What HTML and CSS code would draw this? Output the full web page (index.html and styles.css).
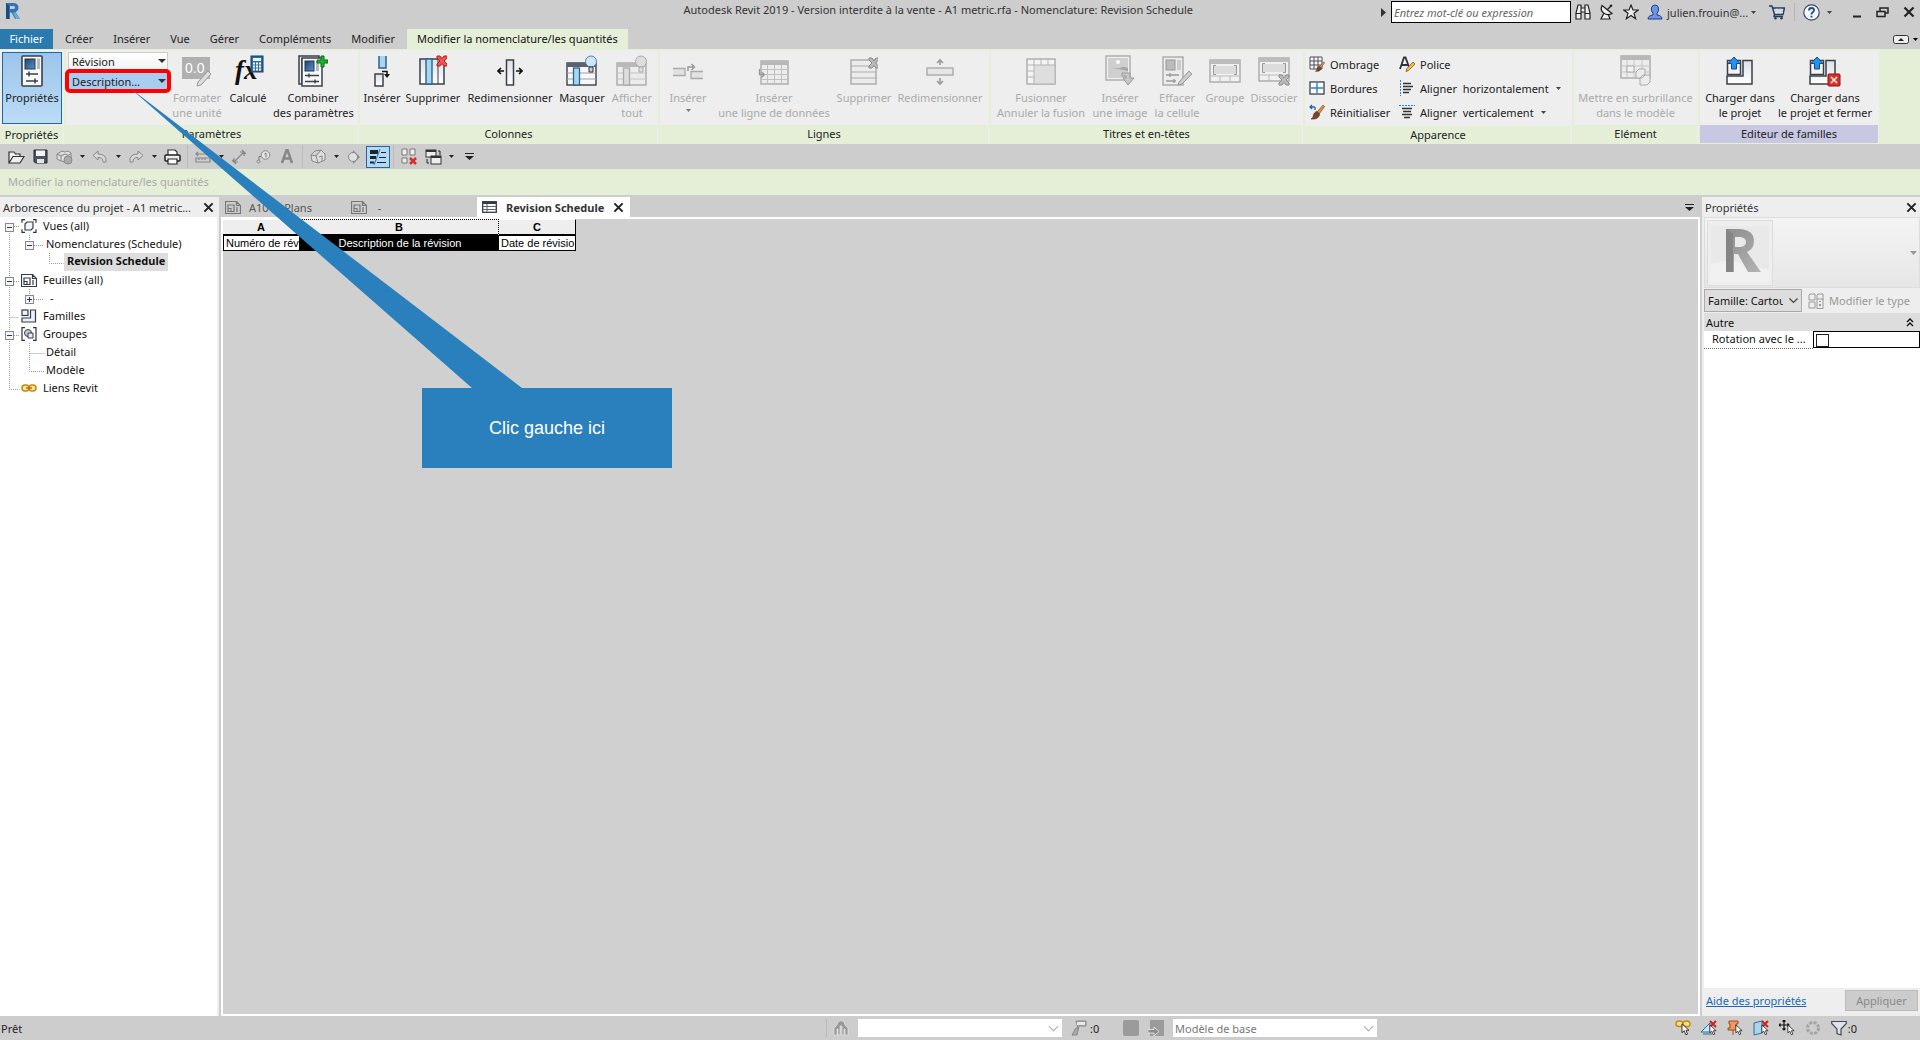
FILE: index.html
```html
<!DOCTYPE html>
<html lang="fr">
<head>
<meta charset="utf-8">
<title>Autodesk Revit 2019</title>
<link rel="stylesheet" href="styles.css">
</head>
<body>
<svg class="defs" aria-hidden="true">
  <defs>
    <linearGradient id="paper" x1="0" y1="0" x2="0" y2="1"><stop offset="0" stop-color="#dde0e6"/><stop offset="1" stop-color="#fff"/></linearGradient>
    <linearGradient id="blue" x1="0" y1="0" x2="1" y2="1"><stop offset="0" stop-color="#1c4572"/><stop offset="1" stop-color="#5d93c8"/></linearGradient>
    <linearGradient id="grey3d" x1="0" y1="0" x2="1" y2="1"><stop offset="0" stop-color="#8c8c8c"/><stop offset="1" stop-color="#b4b4b4"/></linearGradient>
    <symbol id="caret" viewBox="0 0 7 4"><path d="M0 0h7L3.500 4z" fill="currentColor"/></symbol>
    <symbol id="cross" viewBox="0 0 12 12"><path d="M1.500 1.500l9 9M10.500 1.500l-9 9" stroke="currentColor" stroke-width="2.200" fill="none"/></symbol>
    <symbol id="sheet" viewBox="0 0 16 13"><path d="M.5.5h11l4 4v8H.5z M11.500.5v4h4 M3 4h6v6.500H3z M3 7.500h3V10.500 M12 6v5" fill="none" stroke="currentColor" stroke-width="1.200"/></symbol>
    <symbol id="cursor" viewBox="0 0 9 13"><path d="M1 .8v9l2.200-2 1.600 4 1.700-.7L5 7.300h3z" fill="#fff" stroke="#222" stroke-width=".9"/></symbol>
    <symbol id="props" viewBox="0 0 22 32"><rect x="1" y="1" width="20" height="30" rx="1" fill="#f8f9fb" stroke="#3a404a" stroke-width="1.600"/><rect x="4" y="4" width="10" height="10" fill="url(#blue)" stroke="#22354c"/><path d="M16 3.500h3V14h-3z" fill="#b4b9c2"/><path d="M5 19h12M5 26h12" stroke="#3a404a" stroke-width="1.500"/><path d="M8 16.500v5M14 23.500v5" stroke="#3a404a" stroke-width="1.500"/></symbol>
    <symbol id="brush" viewBox="0 0 16 16"><path d="M8 8L14 1.200 15.500 2.500 10 10z" fill="#e79a43" stroke="#7a431a" stroke-width=".8"/><path d="M8 7.500l2.500 2.500c0 4-4 5.500-8.500 5 2-1 2-2 2.500-4 .5-2 1.500-3 3.500-3.500z" fill="#77452a" stroke="#4b2a17" stroke-width=".6"/></symbol>
    <symbol id="load" viewBox="0 0 28 30"><path d="M17 4.500h9V28H1V20h16z" fill="url(#paper)" stroke="#3a404a" stroke-width="1.500"/><rect x="1.500" y="4.500" width="13" height="14" fill="#f4f5f8" stroke="#3a404a" stroke-width="1.500"/><path d="M8 1l6 6.500h-3.500V13h-5V7.500H2z" fill="#2492f0" stroke="#0f4b91"/></symbol>
  </defs>
</svg>

<header class="titlebar">
  <svg class="app-logo" width="16" height="18" viewBox="0 0 16 18"><path d="M1 1h8q4.500.5 4.500 4.500 0 3-3 4.500L15 17h-5L6.500 10.500H5V17H1z" fill="#2f74b5"/><path d="M1 1l3 3v13H1z" fill="#1b4a80"/><path d="M5 4h3.500q1.500 0 1.500 1.500T8.500 7H5z" fill="#cdcdcd"/><path d="M8 11l2-1 5 7h-4z" fill="#67aed2"/></svg>
  <h1 class="window-title">Autodesk Revit 2019 - Version interdite à la vente - A1 metric.rfa - Nomenclature: Revision Schedule</h1>
  <div class="title-tools">
    <svg width="5" height="9" viewBox="0 0 5 9"><path d="M0 0l5 4.500L0 9z" fill="#333"/></svg>
    <input class="search" type="text" placeholder="Entrez mot-clé ou expression" aria-label="Recherche">
    <button class="tool" aria-label="Rechercher"><svg width="16" height="16" viewBox="0 0 16 16"><path d="M3 1h3v3h4V1h3l2 8v6h-5V8H6v7H1V9zM1 9.500h5M10 9.500h5M6 4v4M10 4v4" fill="#eee" stroke="#222" stroke-width="1.200"/></svg></button>
    <button class="tool" aria-label="Communication"><svg width="16" height="16" viewBox="0 0 16 16"><path d="M5 9l-3 6h9l-2-5" fill="#eee" stroke="#222" stroke-width="1.200"/><path d="M3 1.500c-3 6 4 11.500 10 8z" fill="#eee" stroke="#222" stroke-width="1.200"/><path d="M8 6l4-4" stroke="#222" stroke-width="1.200"/><circle cx="12" cy="1.800" r="1.300" fill="#222"/></svg></button>
    <button class="tool" aria-label="Favoris"><svg width="16" height="16" viewBox="0 0 16 16"><path d="M8 1l2 5h5.200l-4.200 3.300 1.600 5.400L8 11.500l-4.600 3.200L5 9.300.8 6H6z" fill="#eee" stroke="#222" stroke-width="1.200"/></svg></button>
    <button class="account"><svg width="16" height="16" viewBox="0 0 16 16"><path d="M1 15q0-3.500 5-4V9.500Q4 7 4.500 4 5 1 8 1t3.500 3q.5 3-1.500 5.500V11q5 .5 5 4z" fill="#6f94e4" stroke="#1c3c88"/></svg><span>julien.frouin@...</span><svg class="caret" width="5" height="3"><use href="#caret"/></svg></button>
    <button class="tool" aria-label="Boutique"><svg width="16" height="15" viewBox="0 0 16 15"><path d="M0 1h3l2.500 8.500H14L15.500 3H4M5.500 9.500L5 11.500h9" fill="none" stroke="#243b5e" stroke-width="1.400"/><path d="M5 5h9M6 7.500h8M8 3.500v5M11 3.500v5" stroke="#dbe3f0"/><circle cx="6.500" cy="13.300" r="1.200" fill="#243b5e"/><circle cx="12.500" cy="13.300" r="1.200" fill="#243b5e"/></svg></button>
    <span class="rule"></span>
    <button class="tool help" aria-label="Aide"><svg width="17" height="17" viewBox="0 0 17 17"><circle cx="8.500" cy="8.500" r="7.700" fill="#f4f7fb" stroke="#3a4a66" stroke-width="1.200"/><path d="M6 6.500q0-2.500 2.500-2.500T11 6.300q0 1.200-1.300 2T8.500 10.500M8.500 11.800v1.800" fill="none" stroke="#1f4f9c" stroke-width="1.900"/></svg><svg class="caret" width="5" height="3"><use href="#caret"/></svg></button>
    <button class="win" aria-label="Réduire"><svg width="9" height="12" viewBox="0 0 9 12"><path d="M0 10.500h8" stroke="#222" stroke-width="2"/></svg></button>
    <button class="win" aria-label="Restaurer"><svg width="13" height="11" viewBox="0 0 13 11"><path d="M4 4V1h8v5H9M1 4.500h8v5H1z" fill="none" stroke="#222" stroke-width="1.500"/></svg></button>
    <button class="win" aria-label="Fermer"><svg class="dark" width="12" height="12"><use href="#cross"/></svg></button>
  </div>
</header>

<nav class="tabs">
  <button class="tab file">Fichier</button>
  <button class="tab">Créer</button>
  <button class="tab">Insérer</button>
  <button class="tab">Vue</button>
  <button class="tab">Gérer</button>
  <button class="tab">Compléments</button>
  <button class="tab">Modifier</button>
  <button class="tab active">Modifier la nomenclature/les quantités</button>
  <button class="ribbon-toggle" aria-label="Réduire le ruban"><svg width="16" height="9" viewBox="0 0 16 9"><rect x=".5" y=".5" width="15" height="8" rx="2" fill="#eee" stroke="#333"/><path d="M5 6l3-3 3 3z" fill="#222"/></svg><svg width="5" height="3"><use href="#caret"/></svg></button>
</nav>

<section class="ribbon" aria-label="Ruban">
  <div class="panel p-props">
    <div class="body">
      <button class="big pressed"><svg class="ico" width="22" height="32"><use href="#props"/></svg>Propriétés</button>
    </div>
    <h2>Propriétés</h2>
  </div>

  <div class="panel p-params">
    <div class="body">
      <div class="combos">
        <span class="combo"><select aria-label="Catégorie"><option>Révision</option></select></span>
        <span class="combo hot"><select aria-label="Paramètre"><option>Description...</option></select></span>
      </div>
      <button class="big" disabled><svg class="ico" width="32" height="32" viewBox="0 0 32 32"><rect x="1" y="2" width="28" height="22" fill="#b0b0b0"/><text x="4" y="18" class="ico-num">0.0</text><path d="M17 27l10-11 3 3-10 11-4 1z" fill="#ddd" stroke="#999"/></svg>Formater<br>une unité</button>
      <button class="big"><svg class="ico" width="32" height="32" viewBox="0 0 32 32"><text x="3" y="24" class="ico-fx">fx</text><rect x="19" y="1" width="12" height="16" fill="#2d6da5" stroke="#1a3a5c"/><path d="M21 3h8v3h-8z" fill="#e9f4fb"/><path d="M21 8.500h8M21 11.500h8M21 14.500h8" stroke="#fff" stroke-width="2" stroke-dasharray="2 1"/></svg>Calculé</button>
      <button class="big"><svg class="ico" width="30" height="32" viewBox="0 0 30 32"><path d="M1 1h20v3H4v25H1z" fill="#eee" stroke="#3a404a" stroke-width="1.500"/><rect x="4" y="3" width="20" height="28" fill="#f8f9fb" stroke="#3a404a" stroke-width="1.500"/><rect x="7" y="6" width="9" height="10" fill="url(#blue)" stroke="#22354c"/><path d="M18 6h3v10h-3z" fill="#b4b9c2"/><path d="M7 20.500h14M7 26.500h14M11 18.500v4M17 24.500v4" stroke="#3a404a" stroke-width="1.400"/><path d="M23 1h3v4h4v3h-4v4h-3V8h-4V5h4z" fill="#19b52b" stroke="#0a6d17"/></svg>Combiner<br>des paramètres</button>
    </div>
    <h2>Paramètres</h2>
  </div>

  <div class="panel p-cols">
    <div class="body">
      <button class="big"><svg class="ico" width="18" height="32" viewBox="0 0 18 32"><path d="M6 1v12h7V1z" fill="#a9d6ee"/><path d="M6 1v12h7V1" fill="none" stroke="#28648f" stroke-width="1.500"/><rect x="2" y="19" width="8" height="12" fill="url(#paper)" stroke="#3a404a" stroke-width="1.500"/><path d="M9 16.500h5v4" fill="none" stroke="#111" stroke-width="1.500"/><path d="M11 19h6l-3 4z" fill="#111"/></svg>Insérer</button>
      <button class="big"><svg class="ico" width="28" height="32" viewBox="0 0 28 32"><rect x="1" y="4" width="24" height="25" fill="url(#paper)" stroke="#3a404a" stroke-width="1.500"/><rect x="7" y="4" width="6" height="25" fill="#a9d6ee" stroke="#28648f" stroke-width="1.400"/><path d="M19 4v25" stroke="#3a404a"/><path d="M18 1l3 0 2 2.500L25 1h3v2l-3 3 3 3v2h-3l-2-2.500L21 11h-3V9l3-3-3-3z" fill="#f2574f" stroke="#b01a16"/></svg>Supprimer</button>
      <button class="big"><svg class="ico" width="26" height="32" viewBox="0 0 26 32"><rect x="9.500" y="5" width="7" height="25" fill="url(#paper)" stroke="#3a404a" stroke-width="1.500"/><path d="M7 16H2M19 16h5M4 13l-3 3 3 3M22 13l3 3-3 3" fill="none" stroke="#111" stroke-width="1.600"/></svg>Redimensionner</button>
      <button class="big"><svg class="ico" width="32" height="32" viewBox="0 0 32 32"><rect x="1" y="8" width="29" height="22" fill="#f7f8fa" stroke="#3a404a" stroke-width="1.400"/><path d="M1 8h29v4H1z" fill="#5c626d"/><path d="M1 18h29M1 24h29" stroke="#9aa0aa"/><rect x="7.500" y="13" width="6" height="17" fill="#a9d6ee" stroke="#28648f" stroke-width="1.300"/><circle cx="25" cy="6.500" r="5.500" fill="#cfe5fa" stroke="#4d7fb5"/><path d="M23 12h4v5h-4z" fill="#ccc" stroke="#333"/></svg>Masquer</button>
      <button class="big" disabled><svg class="ico" width="32" height="32" viewBox="0 0 32 32"><rect x="1" y="8" width="29" height="22" fill="#ececec" stroke="#aaa" stroke-width="1.400"/><path d="M1 8h29v4H1z" fill="#b8b8b8"/><path d="M1 18h29M1 24h29" stroke="#c4c4c4"/><rect x="7.500" y="13" width="6" height="17" fill="#ddd" stroke="#aaa" stroke-width="1.300"/><circle cx="25" cy="6.500" r="5.500" fill="#ddd" stroke="#aaa"/><path d="M23 12h4v5h-4z" fill="#ddd" stroke="#aaa"/></svg>Afficher<br>tout</button>
    </div>
    <h2>Colonnes</h2>
  </div>

  <div class="panel p-rows">
    <div class="body">
      <button class="big" disabled><svg class="ico" width="30" height="32" viewBox="0 0 30 32"><path d="M0 13.500h12v7H0M30 16.500H18v7h12" fill="#e2e2e2" stroke="#aaa" stroke-width="1.300"/><path d="M15 16v-4h5M18.500 9l3 3-3 3" fill="none" stroke="#999" stroke-width="1.500"/></svg>Insérer<svg class="drop" width="5" height="3"><use href="#caret"/></svg></button>
      <button class="big" disabled><svg class="ico" width="32" height="32" viewBox="0 0 32 32"><rect x="3" y="6" width="27" height="23" fill="#ececec" stroke="#aaa" stroke-width="1.400"/><path d="M3 6h27v4H3z" fill="#b8b8b8"/><path d="M3 14.500h27M3 19.500h27M3 24.500h27M9.500 10v19M16.500 10v19M23.500 10v19" stroke="#c0c0c0"/><path d="M1.500 14v5.500h4M3.500 17l3 2.500-3 3" fill="none" stroke="#999" stroke-width="1.400"/></svg>Insérer<br>une ligne de données</button>
      <button class="big" disabled><svg class="ico" width="28" height="32" viewBox="0 0 28 32"><rect x="1" y="5" width="25" height="24" fill="#ececec" stroke="#aaa" stroke-width="1.400"/><path d="M1 11h25M1 17h25M1 23h25" stroke="#aaa"/><path d="M19 3l3 0 2 3L26 3h2.500v2l-3 3 3 3v2H26l-2-2.500L22 13h-3v-2l3-3-3-3z" fill="#bbb" stroke="#888"/></svg>Supprimer</button>
      <button class="big" disabled><svg class="ico" width="28" height="32" viewBox="0 0 28 32"><rect x="1" y="13" width="26" height="7" fill="#e6e6e6" stroke="#aaa" stroke-width="1.400"/><path d="M14 10V6M14 23v5M11 8l3-3 3 3M11 26l3 3 3-3" fill="none" stroke="#999" stroke-width="1.600"/></svg>Redimensionner</button>
    </div>
    <h2>Lignes</h2>
  </div>

  <div class="panel p-titles">
    <div class="body">
      <button class="big" disabled><svg class="ico" width="30" height="32" viewBox="0 0 30 32"><rect x="1" y="4" width="28" height="25" fill="#f4f4f4" stroke="#aaa" stroke-width="1.400"/><path d="M8 10h21v19H8z" fill="#dedede" stroke="#b4b4b4"/><path d="M8 4v6M15 4v6M22 4v6M1 10h7M1 16h7M1 22h7" stroke="#b4b4b4"/></svg>Fusionner<br>Annuler la fusion</button>
      <button class="big" disabled><svg class="ico" width="32" height="32" viewBox="0 0 32 32"><rect x="2" y="1" width="24" height="24" fill="#f0f0f0" stroke="#aaa" stroke-width="1.400"/><path d="M4 3h20v20H4z" fill="#cfcfcf"/><path d="M4 14q8-1 20 2v-3q-5-2-8 0z" fill="#a6a6a6"/><circle cx="14" cy="7" r="2" fill="#fff"/><path d="M18 18h8v5h4l-6 7-5-7h3v-2h-4z" fill="#c8c8c8" stroke="#999"/></svg>Insérer<br>une image</button>
      <button class="big" disabled><svg class="ico" width="30" height="32" viewBox="0 0 30 32"><rect x="1" y="2" width="20" height="28" fill="#ececec" stroke="#aaa" stroke-width="1.400"/><rect x="4" y="5" width="9" height="10" fill="#bbb" stroke="#999"/><path d="M15 5h4v10h-4z" fill="#ccc"/><path d="M4 20h13M4 26h10M8 18v4M12 24v4" stroke="#999" stroke-width="1.300"/><path d="M17 27l10-11 3 3-10 10-4 1z" fill="#ccc" stroke="#999"/></svg>Effacer<br>la cellule</button>
      <button class="big" disabled><svg class="ico" width="32" height="32" viewBox="0 0 32 32"><rect x="1" y="5" width="30" height="22" fill="#f0f0f0" stroke="#aaa" stroke-width="1.400"/><path d="M1 5h30v4H1z" fill="#bcbcbc"/><path d="M1 21h30M11 21v6M21 21v6" stroke="#bbb"/><path d="M5 11h22v8H5z" fill="#dcdcdc"/><path d="M7 10.500H4.500v9H7M25 10.500h2.500v9H25" fill="none" stroke="#999"/></svg>Groupe</button>
      <button class="big" disabled><svg class="ico" width="32" height="32" viewBox="0 0 32 32"><rect x="1" y="3" width="30" height="23" fill="#f0f0f0" stroke="#aaa" stroke-width="1.400"/><path d="M1 3h30v4H1z" fill="#bcbcbc"/><path d="M1 20h30M11 20v6" stroke="#bbb"/><path d="M5 9h22v8H5z" fill="#dcdcdc"/><path d="M7 8.500H4.500v9H7M25 8.500h2.500v9H25" fill="none" stroke="#999"/><path d="M21 20h3l2 3 2-3h3v2l-3 3 3 3v2h-3l-2-2.500-2 2.500h-3v-2l3-3-3-3z" fill="#bbb" stroke="#888"/></svg>Dissocier</button>
    </div>
    <h2>Titres et en-têtes</h2>
  </div>

  <div class="panel p-look">
    <div class="body">
      <div class="small-list">
        <button class="small"><svg width="16" height="16" viewBox="0 0 16 16"><path d="M1 1h12v12H1zM1 5h12M1 9h12M5 1v12M9 1v12" fill="#f6f6f6" stroke="#4a4f59"/><use href="#brush" x="5" y="5" width="11" height="11"/></svg>Ombrage</button>
        <button class="small"><svg width="16" height="16" viewBox="0 0 16 16"><rect x="1" y="2" width="14" height="12" fill="#fff" stroke="#3a404a" stroke-width="1.300"/><path d="M8 3v10M2 8h12" stroke="#2583cf" stroke-width="1.400"/></svg>Bordures</button>
        <button class="small"><svg width="16" height="16" viewBox="0 0 16 16"><use href="#brush"/><path d="M1 3h4q1.500 0 1 3M3 1L1 3l2 2" fill="none" stroke="#1669b3" stroke-width="1.300"/></svg>Réinitialiser</button>
      </div>
      <div class="small-list">
        <button class="small"><svg width="16" height="16" viewBox="0 0 16 16"><path d="M1 13L5 1.500h1.500L10 11M3 9h6" fill="none" stroke="#2d333d" stroke-width="1.800"/><path d="M8 12.500L14 6l2 2-6.500 6.500-2.500 1z" fill="#f3c04d" stroke="#8a4d15" stroke-width=".8"/></svg>Police</button>
        <button class="small"><svg width="16" height="16" viewBox="0 0 16 16"><path d="M1.500 0v16" stroke="#2583cf" stroke-dasharray="2 1"/><path d="M4 3.500h8M4 6.500h10M4 9.500h8M4 12.500h6" stroke="#333" stroke-width="1.300"/></svg>Aligner&nbsp; horizontalement<svg class="caret" width="5" height="3"><use href="#caret"/></svg></button>
        <button class="small"><svg width="16" height="16" viewBox="0 0 16 16"><path d="M0 1.500h16" stroke="#2583cf" stroke-dasharray="2 1"/><path d="M3 4.500h10M4 7.500h8M3 10.500h10M5 13.500h6" stroke="#333" stroke-width="1.300"/></svg>Aligner&nbsp; verticalement<svg class="caret" width="5" height="3"><use href="#caret"/></svg></button>
      </div>
    </div>
    <h2>Apparence</h2>
  </div>

  <div class="panel p-elem">
    <div class="body">
      <button class="big" disabled><svg class="ico" width="32" height="32" viewBox="0 0 32 32"><rect x="1" y="1" width="29" height="22" fill="#ececec" stroke="#aaa" stroke-width="1.400"/><path d="M1 1h29v4H1z" fill="#b8b8b8"/><path d="M1 11h29M1 17h29M7 5v18M14 5v18M22 5v18" stroke="#c4c4c4"/><path d="M7 11h7v6H7z" fill="#f4f4f4" stroke="#aaa"/><path d="M16 17l3-3h6v6l-3 3h-6zM20 23l3-3h7v7l-3 3h-7z" fill="#ececec" stroke="#aaa"/></svg>Mettre en surbrillance<br>dans le modèle</button>
    </div>
    <h2>Elément</h2>
  </div>

  <div class="panel p-family">
    <div class="body">
      <button class="big"><svg class="ico" width="28" height="32"><use href="#load" width="28" height="30" y="1"/></svg>Charger dans<br>le projet</button>
      <button class="big"><svg class="ico" width="32" height="32" viewBox="0 0 32 32"><use href="#load" x="0" y="1" width="28" height="30"/><rect x="19" y="19" width="12" height="12" rx="1" fill="#d9332c" stroke="#8e120e"/><path d="M22 22l6 6M28 22l-6 6" stroke="#fff" stroke-width="1.400"/></svg>Charger dans<br>le projet et fermer</button>
    </div>
    <h2>Editeur de familles</h2>
  </div>
</section>

<div class="quickbar">
  <button class="q" aria-label="Ouvrir"><svg width="17" height="14" viewBox="0 0 17 14"><path d="M1 13V2h5l1.500 2H12v2.500M1 13L5 6.500h11L12 13z" fill="#eee" stroke="#333" stroke-width="1.200"/></svg></button>
  <button class="q" aria-label="Enregistrer"><svg width="15" height="15" viewBox="0 0 15 15"><path d="M1 1h13v13H2.500L1 12.500z" fill="#4a5361" stroke="#22272f"/><path d="M3 1.500h9V7H3z" fill="#f5f5f5"/><path d="M4 10h7v4H4z" fill="#e4e4e4"/></svg></button>
  <button class="q off" aria-label="Synchroniser"><svg width="17" height="16" viewBox="0 0 17 16"><path d="M1 5l5-3 3 1 3-1 3 2v5l-6 4-4-1-4-2zM1 5l4 2 4-2M5 7v5M9 5l3 1.500 3-2" fill="#ddd" stroke="#888"/><circle cx="12" cy="11" r="4" fill="#aaa" stroke="#888"/></svg></button>
  <button class="d" aria-label="Options de synchronisation"><svg width="5" height="3"><use href="#caret"/></svg></button>
  <button class="q off" aria-label="Annuler"><svg width="16" height="13" viewBox="0 0 16 13"><path d="M6 1L1 5.500 6 10V7.500q5-.5 5 4.500h3q1-8-8-8z" fill="#d8d8d8" stroke="#888"/></svg></button>
  <button class="d" aria-label="Liste des annulations"><svg width="5" height="3"><use href="#caret"/></svg></button>
  <button class="q off" aria-label="Rétablir"><svg width="16" height="13" viewBox="0 0 16 13"><path d="M10 1l5 4.500-5 4.500V7.500q-5-.5-5 4.500H2Q1 4 10 4z" fill="#d8d8d8" stroke="#888"/></svg></button>
  <button class="d" aria-label="Liste des rétablissements"><svg width="5" height="3"><use href="#caret"/></svg></button>
  <button class="q" aria-label="Imprimer"><svg width="17" height="16" viewBox="0 0 17 16"><path d="M4 6V1h7l2 2v3" fill="#fff" stroke="#333" stroke-width="1.200"/><rect x="1" y="6" width="15" height="6" rx="1" fill="#eee" stroke="#222" stroke-width="1.500"/><path d="M4 10h9v5H4z" fill="#fff" stroke="#222" stroke-width="1.200"/></svg></button>
  <span class="rule"></span>
  <button class="q off" aria-label="Mesurer"><svg width="16" height="12" viewBox="0 0 16 12"><path d="M1 3h14M3 1L1 3l2 2M13 1l2 2-2 2M1 7h14v4H1zM4 7v2M7 7v2M10 7v2" fill="none" stroke="#888" stroke-width="1.200"/></svg></button>
  <button class="d" aria-label="Options de mesure"><svg width="5" height="3"><use href="#caret"/></svg></button>
  <button class="q off" aria-label="Cote alignée"><svg width="16" height="16" viewBox="0 0 16 16"><path d="M3 13L13 3M9 3h4v4M3 9v4h4M11 1l4 4M1 11l4 4" fill="none" stroke="#888" stroke-width="1.200"/></svg></button>
  <button class="q off" aria-label="Etiquette"><svg width="15" height="14" viewBox="0 0 15 14"><circle cx="9.500" cy="5" r="4.300" fill="#e2e2e2" stroke="#888"/><path d="M8.500 4l1.500-1v4.500M5 6.500H3v4" fill="none" stroke="#777"/><circle cx="2.500" cy="11.500" r="1.500" fill="none" stroke="#888"/></svg></button>
  <button class="q off" aria-label="Texte"><svg width="14" height="15" viewBox="0 0 14 15"><path d="M2 14L6.500 1h1L12 14M4 9.500h6" fill="none" stroke="#888" stroke-width="2.500"/></svg></button>
  <span class="rule"></span>
  <button class="q off" aria-label="Vue 3D"><svg width="16" height="15" viewBox="0 0 16 15"><path d="M1 6l4-4 6-1 4 4v6l-7 3-6-2zM1 6l5 1 5-6M6 7l2 7M9 8l3-1v5" fill="#ddd" stroke="#888"/></svg></button>
  <button class="d" aria-label="Options de vue 3D"><svg width="5" height="3"><use href="#caret"/></svg></button>
  <button class="q off" aria-label="Coupe"><svg width="14" height="14" viewBox="0 0 14 14"><path d="M6 0l7 7-7 7z" fill="#888"/><circle cx="6" cy="7" r="4.500" fill="#e0e0e0" stroke="#888"/></svg></button>
  <button class="q on" aria-label="Lignes fines" aria-pressed="true"><svg width="18" height="16" viewBox="0 0 18 16"><path d="M1 3h8" stroke="#222" stroke-width="4"/><path d="M1 8.500h6" stroke="#222" stroke-width="3"/><path d="M1 13.500h4" stroke="#222" stroke-width="2"/><path d="M12 3.500h5M10 8.500h7M8 13.500h9" stroke="#222"/><path d="M11 0L5 16" stroke="#2583cf" stroke-width="1.200"/></svg></button>
  <span class="rule"></span>
  <button class="q" aria-label="Fermer les fenêtres masquées"><svg width="16" height="17" viewBox="0 0 16 17"><path d="M1 1h5v6H1zM9 1h5v6H9zM1 10h5v5H1z" fill="#eee" stroke="#777"/><path d="M9 10l6 6M15 10l-6 6" stroke="#cf332a" stroke-width="2.500"/></svg></button>
  <button class="q" aria-label="Changer de fenêtre"><svg width="17" height="16" viewBox="0 0 17 16"><rect x="1" y="1" width="10" height="7" fill="#eee" stroke="#333"/><rect x="6" y="7" width="10" height="8" fill="#eee" stroke="#333"/><path d="M1 2h10M6 8h10" stroke="#333" stroke-width="2"/><path d="M13 2h2v4M4 14H2v-4" fill="none" stroke="#222"/></svg></button>
  <button class="d" aria-label="Liste des fenêtres"><svg width="5" height="3"><use href="#caret"/></svg></button>
  <button class="q" aria-label="Personnaliser"><svg width="9" height="7" viewBox="0 0 9 7"><path d="M0 0h9v1H0zM0 3h9L4.500 7z" fill="#222"/></svg></button>
</div>

<div class="optionsbar">Modifier la nomenclature/les quantités</div>

<main class="workspace">
  <aside class="browser">
    <div class="dock-head"><h2>Arborescence du projet - A1 metric...</h2><button class="x" aria-label="Fermer"><svg width="11" height="11"><use href="#cross"/></svg></button></div>
    <ul class="tree">
      <li><svg class="guide" width="20" height="18"><path class="dots" d="M14 9.500h6M9.500 14v4"/><rect x="5.500" y="6.500" width="8" height="8"/><path class="sign" d="M7 10.500h5"/></svg><svg class="node" width="16" height="14" viewBox="0 0 16 14"><path d="M4 .7H1v3M12 .7h3v3M4 13.300H1v-3M12 13.300h3v-3" fill="none" stroke="#333" stroke-width="1.200"/><path d="M4 5l2-2h6v6l-2 2H4z" fill="#f4f6fa" stroke="#333c4a" stroke-width="1.200"/></svg><span>Vues (all)</span></li>
      <li><svg class="guide" width="45" height="18"><path class="dots" d="M9.500 0v18M29.500 0v6M34 10.500h10"/><rect x="25.500" y="6.500" width="8" height="8"/><path class="sign" d="M27 10.500h5"/></svg><span>Nomenclatures (Schedule)</span></li>
      <li><svg class="guide" width="64" height="18"><path class="dots" d="M9.500 0v18M49.500 0v10.500h14"/></svg><span class="selected">Revision Schedule</span></li>
      <li><svg class="guide" width="20" height="18"><path class="dots" d="M9.500 0v6M14 10.500h6M9.500 14v4"/><rect x="5.500" y="6.500" width="8" height="8"/><path class="sign" d="M7 10.500h5"/></svg><svg class="node" width="16" height="13"><use href="#sheet"/></svg><span>Feuilles (all)</span></li>
      <li><svg class="guide" width="45" height="18"><path class="dots" d="M9.500 0v18M29.500 0v6M34 10.500h10"/><rect x="25.500" y="6.500" width="8" height="8"/><path class="sign" d="M27 10.500h5M29.500 8v5"/></svg><span class="dash">-</span></li>
      <li><svg class="guide" width="20" height="18"><path class="dots" d="M9.500 0v18M9.500 10.500h10"/></svg><svg class="node" width="16" height="14" viewBox="0 0 16 14"><path d="M9.500 1H14.500V13H1V9h8.500z" fill="#eef0f4" stroke="#333c4a" stroke-width="1.200"/><rect x="1" y="1" width="6" height="5.500" fill="#eef0f4" stroke="#333c4a" stroke-width="1.200"/></svg><span>Familles</span></li>
      <li><svg class="guide" width="20" height="18"><path class="dots" d="M9.500 0v6M14 10.500h6M9.500 14v4"/><rect x="5.500" y="6.500" width="8" height="8"/><path class="sign" d="M7 10.500h5"/></svg><svg class="node" width="16" height="14" viewBox="0 0 16 14"><path d="M4 .7H1v12.600h3M12 .7h3v12.600h-3" fill="none" stroke="#333" stroke-width="1.200"/><circle cx="7" cy="6" r="3.500" fill="#c9ced8" stroke="#333c4a"/><path d="M7 6h5v5H7z" fill="#e9ecf2" stroke="#333c4a"/></svg><span>Groupes</span></li>
      <li><svg class="guide" width="45" height="18"><path class="dots" d="M9.500 0v18M29.500 0v18M29.500 10.500h15"/></svg><span>Détail</span></li>
      <li><svg class="guide" width="45" height="18"><path class="dots" d="M9.500 0v18M29.500 0v10.500h15"/></svg><span>Modèle</span></li>
      <li><svg class="guide" width="20" height="18"><path class="dots" d="M9.500 0v10.500h10"/></svg><svg class="node" width="16" height="8" viewBox="0 0 16 8"><rect x="1" y="1" width="7" height="6" rx="3" fill="#ffe9a0" stroke="#c78a10" stroke-width="1.600"/><rect x="8" y="1" width="7" height="6" rx="3" fill="#ffe9a0" stroke="#c78a10" stroke-width="1.600"/><path d="M5 4h6" stroke="#a86f08" stroke-width="1.500"/></svg><span>Liens Revit</span></li>
    </ul>
  </aside>

  <section class="document">
    <div class="doc-tabs">
      <button class="doc-tab"><svg width="16" height="13"><use href="#sheet"/></svg><span>A101 - Plans</span></button>
      <button class="doc-tab"><svg width="16" height="13"><use href="#sheet"/></svg><span>&nbsp;-</span></button>
      <button class="doc-tab current"><svg width="15" height="12" viewBox="0 0 15 12"><rect x=".7" y=".7" width="13.600" height="10.600" fill="#fff" stroke="#333c4a" stroke-width="1.300"/><path d="M1 2h13" stroke="#333c4a" stroke-width="2"/><path d="M1 5.500h13M1 8.500h13M5 3v8" stroke="#5a6270"/></svg><span>Revision Schedule</span><svg class="dark" width="11" height="11"><use href="#cross"/></svg></button>
      <button class="doc-more" aria-label="Autres vues"><svg width="9" height="7" viewBox="0 0 9 7"><path d="M0 0h9v1H0zM0 3h9L4.500 7z" fill="#222"/></svg></button>
    </div>
    <div class="sheet">
      <table class="schedule">
        <thead><tr><th class="c-num">A</th><th class="c-desc">B</th><th class="c-date">C</th></tr></thead>
        <tbody><tr><td>Numéro de révi</td><td class="picked">Description de la révision</td><td>Date de révisio</td></tr></tbody>
      </table>
    </div>
  </section>

  <aside class="properties">
    <div class="dock-head"><h2>Propriétés</h2><button class="x" aria-label="Fermer"><svg width="11" height="11"><use href="#cross"/></svg></button></div>
    <div class="preview">
      <div class="thumb"><svg width="58" height="58" viewBox="0 0 58 58"><path d="M0 2h58v56H0z" fill="#e9e9e9"/><path d="M0 40l18-4 40 10v12H0z" fill="#f1f1f1"/><path d="M15 5h14q14 1 14 12 0 8-7 11l14 20H37L27 30h-4v18h-8z" fill="url(#grey3d)"/><path d="M15 5l7 5v38h-7z" fill="#858585"/><path d="M24 13h6q5 1 5 5t-5 5h-6z" fill="#e9e9e9"/></svg></div>
      <svg class="faint" width="7" height="4"><use href="#caret"/></svg>
    </div>
    <div class="type-row">
      <span class="type-select"><select aria-label="Type"><option>Famille: Cartou</option></select><svg width="9" height="6" viewBox="0 0 9 6"><path d="M.5.5l4 4 4-4" fill="none" stroke="#444" stroke-width="1.200"/></svg></span>
      <button class="edit-type" disabled><svg width="16" height="16" viewBox="0 0 16 16"><path d="M1 2l1-1h5v6H1zM9 2l1-1h5v6M9 2v4M1 9h6v6H1z" fill="none" stroke="#999"/><path d="M9 6h6v9.500H9zM11 8.500h2M11 11l2 2M13 11l-2 2" fill="none" stroke="#999"/></svg>Modifier le type</button>
    </div>
    <div class="group"><span>Autre</span><svg width="8" height="9" viewBox="0 0 8 9"><path d="M1 4l3-3 3 3M1 8l3-3 3 3" fill="none" stroke="#111" stroke-width="1.400"/></svg></div>
    <div class="prop"><label for="rot">Rotation avec le ...</label><span class="value"><input id="rot" type="checkbox"></span></div>
    <div class="prop-space"></div>
    <div class="prop-foot"><a href="#aide">Aide des propriétés</a><button class="apply" disabled>Appliquer</button></div>
  </aside>
</main>

<footer class="status">
  <span class="ready">Prêt</span>
  <div class="sets">
    <svg width="16" height="16" viewBox="0 0 16 16"><path d="M1 15V8l3-3 1-3 3-1.500L11 2l1 3 3 3v7h-3V9h-1v6H9V6H7v9H5V9H4v6z" fill="#999" stroke="#eee" stroke-width=".6"/></svg>
    <span class="flat"><select aria-label="Sous-projet" disabled><option></option></select></span>
    <svg width="16" height="16" viewBox="0 0 16 16"><path d="M5 1h10v5H8L6 15H1l4-7h2z" fill="#aaa" stroke="#888"/><path d="M6 2h8v3H6z" fill="#e8e8e8"/></svg>
    <span class="count">:0</span>
    <svg width="16" height="16" viewBox="0 0 16 16"><rect width="16" height="16" rx="2" fill="#9b9b9b"/></svg>
    <svg width="16" height="16" viewBox="0 0 16 16"><path d="M2 0h14v16H2z" fill="#9b9b9b"/><path d="M0 9.500h6V7l5 4.500L6 16v-3H0z" fill="#8c8c8c" stroke="#eee" stroke-width=".8"/></svg>
    <span class="flat"><select aria-label="Variante" disabled><option>Modèle de base</option></select></span>
  </div>
  <div class="picks">
    <button aria-label="Sélectionner les liens"><svg width="16" height="16" viewBox="0 0 16 16"><path d="M1 4q0-3 3.500-3T8 4q0-3 3.500-3T15 4t-3.500 2.500T8 4q0 2.500-3.500 2.500T1 4z" fill="#ffe28a" stroke="#c78a10" stroke-width="1.500"/><use href="#cursor" x="6" y="3" width="9" height="13"/></svg></button>
    <button aria-label="Sélectionner le fond"><svg width="16" height="16" viewBox="0 0 16 16"><path d="M0 12L9 3v9zM2 14h9" fill="#cfe5f5" stroke="#2c6f9f"/><path d="M9 1l6 6M15 1L9 7" stroke="#c9231c" stroke-width="2"/><use href="#cursor" x="8" y="4" width="8" height="12"/></svg></button>
    <button aria-label="Sélectionner les éléments verrouillés"><svg width="16" height="16" viewBox="0 0 16 16"><path d="M2 1h9v3H9v4h2v2H1V8h2V4H2zM6 10v5" fill="#f0975c" stroke="#a2481c"/><use href="#cursor" x="8" y="4" width="8" height="12"/></svg></button>
    <button aria-label="Sélectionner par face"><svg width="16" height="16" viewBox="0 0 16 16"><path d="M1 3l8-2v12l-8 2z" fill="#a9d6ee" stroke="#2c6f9f"/><path d="M9 1l6 6M15 1L9 7" stroke="#c9231c" stroke-width="2"/><use href="#cursor" x="8" y="4" width="8" height="12"/></svg></button>
    <button aria-label="Glisser à la sélection"><svg width="16" height="16" viewBox="0 0 16 16"><path d="M5 0v10M0 5h10M3.500 1.500L5 0l1.500 1.500M3.500 8.500L5 10l1.500-1.500M1.500 3.500L0 5l1.500 1.500M8.500 3.500L10 5 8.500 6.500" fill="none" stroke="#111" stroke-width="1.200"/><use href="#cursor" x="8" y="4" width="8" height="12"/></svg></button>
    <button aria-label="Processus"><svg width="16" height="16" viewBox="0 0 16 16"><circle cx="8" cy="8" r="5.500" fill="none" stroke="#a4a4a4" stroke-width="3" stroke-dasharray="3 1.300"/></svg></button>
    <button aria-label="Filtre"><svg width="16" height="16" viewBox="0 0 16 16"><path d="M.7 1.500h14.600v2L10 9v6l-4-1.500V9L.7 3.500z" fill="#dfe3ea" stroke="#444b57" stroke-width="1.200"/></svg>:0</button>
  </div>
</footer>

<div class="callout">
  <svg class="tail" width="392" height="300" viewBox="0 0 392 300"><path d="M0 0L392 300H342z" fill="#2980bc"/></svg>
  <p>Clic gauche ici</p>
</div>
</body>
</html>
```
FILE: styles.css
```css
* { box-sizing: border-box; }

body {
  margin: 0;
  height: 100vh;
  display: flex;
  flex-direction: column;
  position: relative;
  overflow: hidden;
  background: #cdcdcd;
  color: #222;
  font: 11px/15px "Noto Sans", "Open Sans", sans-serif;
}

button, input, select { font: inherit; color: inherit; }
button { border: 0; padding: 0; background: none; white-space: nowrap; }
h1, h2, p, ul { margin: 0; padding: 0; font: inherit; }
svg { flex: none; display: block; }
.defs { position: absolute; width: 0; height: 0; }
.dark { color: #222; }

/* Title bar */
.titlebar { display: flex; height: 29px; flex: none; }
.app-logo { margin: 2px 0 0 5px; }
.window-title { margin-left: auto; padding-top: 2px; color: #333; white-space: nowrap; }
.title-tools { display: flex; align-items: center; height: 24px; margin-left: 188px; flex: 0 0 539px; }
.search { width: 180px; height: 22px; margin: 0 4px 0 5px; padding: 0 2px; border: 1px solid #000; background: #fff; border-radius: 0; }
.search::placeholder { color: #666; font-style: italic; opacity: 1; }
.tool { display: flex; align-items: center; margin-right: 8px; }
.account { display: flex; align-items: center; gap: 4px; width: 114px; margin-right: 8px; color: #333; }
.account .caret { margin-left: -1px; }
.rule { width: 1px; align-self: stretch; margin: 2px 4px; background: #b4b4b4; }
.title-tools .rule { margin: 3px 8px 3px 1px; }
.help { gap: 7px; margin-right: 21px; }
.win { margin-right: 14px; }
.win:last-child { margin-right: 0; }

/* Tabs */
.tabs { display: flex; height: 20px; flex: none; }
.tab { padding: 0 10px 1px; }
.file { width: 53px; padding: 0 0 1px; margin-right: 2px; background: #2a7ab0; color: #fff; }
.active { margin-left: 2px; background: #e5efd8; color: #111; }
.ribbon-toggle { display: flex; align-items: center; gap: 4px; margin-left: auto; padding-right: 2px; color: #000; }

/* Ribbon */
.ribbon { display: flex; gap: 3px; height: 95px; flex: none; padding-top: 1px; background: #e5efd8; }
.panel { display: flex; flex-direction: column; flex: none; box-shadow: 1px 0 #eee; }
.panel .body { flex: 1; display: grid; align-items: start; padding: 2px; background: #eee; }
.panel h2 { height: 19px; line-height: 17px; text-align: center; }
.p-props { width: 63px; }
.p-props .body { grid-template-columns: 60px; }
.p-params { width: 291px; }
.p-params .body { grid-template-columns: 103px 52px 50px 80px; }
.p-cols { width: 297px; }
.p-cols .body { grid-template-columns: 40px 62px 92px 52px 48px; }
.p-rows { width: 328px; }
.p-rows .body { grid-template-columns: 52px 120px 60px 92px; }
.p-titles { width: 311px; }
.p-titles .body { grid-template-columns: 96px 62px 52px 44px 54px; }
.p-look { width: 266px; }
.p-look .body { grid-template-columns: 90px 1fr; padding: 2px 4px; }
.p-elem { width: 123px; }
.p-elem .body { grid-template-columns: 1fr; }
.p-family { width: 178px; }
.p-family .body { grid-template-columns: 76px 94px; }
.p-family h2 { height: 18px; margin-bottom: 1px; background: #c8c8e2; }

.big { display: block; padding: 3px 0 0; text-align: center; }
.big .ico { height: 32px; margin: 0 auto 3px; }
.big .drop { margin: 4px auto 0; color: #777; }
.big:disabled { color: #aaa; }
.big.pressed { padding: 2px 0 18px; border: 1px solid #1c69a8; background: linear-gradient(#9cc4ea, #bcdcf7); }
.ico-num { font: 14px "Liberation Sans", sans-serif; fill: #fff; }
.ico-fx { font: italic bold 27px "Liberation Serif", serif; fill: #111; }

.combos { display: grid; gap: 2px; }
.combo { position: relative; width: 100px; height: 18px; }
.combo select { appearance: none; display: block; width: 100px; height: 18px; padding: 0 3px; border: 1px solid #ccc; border-radius: 0; background: linear-gradient(#fff, #f2f2f2); }
.combo::after { content: ""; position: absolute; right: 2px; top: 7px; border: 4px solid transparent; border-top-color: #333; border-bottom: 0; }
.combo.hot { outline: 4px solid #f00; outline-offset: -1px; border-radius: 2px; }
.combo.hot select { background: #a9cdf1; border-color: #a9cdf1; }

.small-list { display: grid; grid-auto-rows: 24px; }
.small { display: flex; align-items: center; gap: 5px; }
.small .caret { margin-left: 2px; }
.caret { color: #444; }

/* Quick access bar */
.quickbar { display: flex; align-items: center; height: 25px; flex: none; padding-left: 4px; color: #222; }
.quickbar button { display: flex; align-items: center; justify-content: center; height: 22px; }
.q { width: 24px; }
.d { width: 12px; }
.quickbar .rule { width: 1px; margin: 1px 3px; background: #bbb; }
.quickbar .on { border: 1px solid #1c69a8; background: #b5d8f6; }

.optionsbar { height: 26px; flex: none; padding-left: 8px; line-height: 26px; background: #e5efd8; color: #aaa; }

/* Workspace */
.workspace { display: flex; flex: 1; min-height: 0; padding-top: 2px; }
.dock-head { display: flex; justify-content: space-between; align-items: center; height: 20px; flex: none; padding: 0 3px; background: #eee; color: #333; white-space: nowrap; }
.x { color: #222; }
.browser { display: flex; flex-direction: column; width: 219px; flex: none; border-right: 2px solid #eee; background: #fff; }
.tree { list-style: none; color: #111; }
.tree li { display: flex; align-items: center; height: 18px; }
.tree li > span { padding: 0 1px 2px; }
.tree .node { width: 16px; margin: 0 5px 0 1px; color: #333c4a; }
.tree li > .selected { height: 18px; padding: 0 3px; line-height: 16px; font-weight: bold; background: #ddd; }
.tree li > .dash { padding-left: 5px; }
.guide { fill: none; stroke: #666; }
.guide .dots { stroke: #999; stroke-dasharray: 1 1; }
.guide rect { fill: #f4f4f4; stroke: #888; }
.guide .sign { stroke: #1c3c78; }

.document { display: flex; flex-direction: column; flex: 1; min-width: 0; margin: 0 2px; }
.doc-tabs { display: flex; height: 20px; flex: none; padding-left: 4px; }
.doc-tab { display: flex; align-items: center; gap: 8px; width: 126px; color: #777; }
.doc-tab span { color: #555; }
.doc-tab.current { gap: 9px; width: 153px; padding-left: 5px; background: #fff; font-weight: bold; }
.doc-tab.current span { color: #333; }
.doc-more { margin-left: auto; padding-right: 6px; }
.sheet { flex: 1; border: 2px solid #fff; background: #d0d0d0; }

.schedule { width: 353px; table-layout: fixed; border-collapse: separate; border-spacing: 0; font: 11px/14px "Liberation Sans", Arial, sans-serif; color: #000; }
.schedule th { height: 17px; padding: 0; background: #eee; border-bottom: 2px solid #000; border-right: 1px dotted #000; border-top: 1px solid #fff; }
.schedule .c-num { width: 77px; }
.schedule .c-desc { width: 199px; border-top: 1px dotted #000; }
.schedule .c-date { border-right: 1px solid #000; }
.schedule td { height: 15px; padding: 0 0 0 2px; border-bottom: 1px solid #000; border-right: 1px solid #000; background: #fff; overflow: hidden; white-space: nowrap; }
.schedule td:first-child { border-left: 1px solid #000; }
.schedule .picked { background: #000; color: #fff; text-align: center; }

/* Properties */
.properties { display: flex; flex-direction: column; width: 218px; flex: none; background: #eee; }
.preview { display: flex; align-items: center; justify-content: space-between; height: 71px; margin-left: 2px; padding: 0 2px; border: 1px solid #ddd; background: linear-gradient(#f4f4f4, #e6e6e6); }
.thumb { width: 66px; height: 66px; padding: 3px; border: 1px solid #ddd; background: #eee; }
.faint { color: #999; }
.type-row { display: flex; align-items: center; gap: 6px; height: 25px; padding-left: 2px; }
.type-select { position: relative; width: 98px; height: 23px; }
.type-select select { appearance: none; width: 98px; height: 23px; padding: 0 18px 0 3px; border: 1px solid #aaa; border-radius: 0; background: #ddd; color: #111; }
.type-select svg { position: absolute; right: 4px; top: 9px; }
.edit-type { display: flex; align-items: center; gap: 5px; color: #999; }
.group { display: flex; align-items: center; justify-content: space-between; height: 18px; margin-left: 2px; padding: 0 6px 0 2px; background: #ddd; color: #111; }
.prop { display: flex; height: 18px; margin-left: 2px; background: #fff; color: #111; }
.prop label { flex: 1; padding-left: 8px; border-bottom: 1px dotted #666; white-space: nowrap; }
.value { width: 107px; height: 17px; border: 1px solid #000; }
.value input { appearance: none; display: block; width: 13px; height: 13px; margin: 2px; border: 1px solid #222; background: #fff; }
.prop-space { flex: 1; margin-left: 2px; background: #fff; }
.prop-foot { display: flex; align-items: center; justify-content: space-between; height: 28px; padding: 0 2px 4px 4px; }
.prop-foot a { color: #1569b8; }
.apply { width: 73px; height: 21px; border: 1px solid #bbb; background: #ccc; color: #888; }

/* Status bar */
.status { display: flex; align-items: center; height: 24px; flex: none; padding-left: 1px; }
.ready { width: 825px; }
.sets { display: flex; align-items: center; gap: 9px; padding-left: 6px; border-left: 1px solid #bbb; color: #222; }
.count { width: 24px; margin-left: -6px; }
.flat { position: relative; background: #fff; }
.flat select { appearance: none; display: block; width: 204px; height: 18px; padding: 0 0 0 2px; border: 0; background: #fff; color: #777; opacity: 1; }
.flat::after { content: ""; position: absolute; right: 5px; top: 4px; width: 6px; height: 6px; border: solid #aaa; border-width: 0 1px 1px 0; transform: rotate(45deg); }
.picks { display: flex; gap: 10px; margin-left: auto; padding-right: 63px; }
.picks button { display: flex; align-items: center; gap: 1px; }

/* Instruction bubble laid over the window */
.callout { position: absolute; left: 422px; top: 388px; width: 250px; height: 80px; display: flex; align-items: center; justify-content: center; background: #2980bc; color: #fff; font: 18px/22px "Liberation Sans", Arial, sans-serif; }
.tail { position: absolute; right: 150px; bottom: 80px; }
```
